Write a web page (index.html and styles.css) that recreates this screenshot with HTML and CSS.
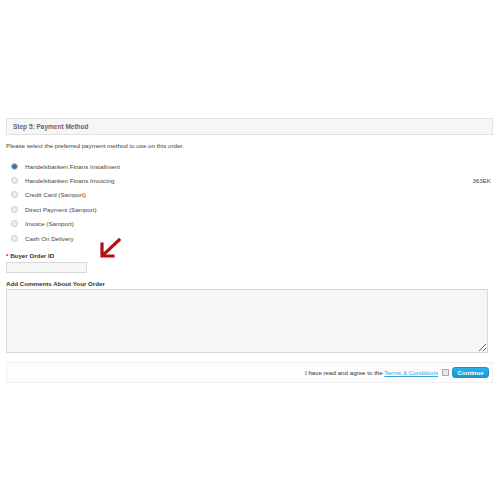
FILE: index.html
```html
<!doctype html>
<html lang="en">
<head>
    <meta charset="utf-8">
    <title>Checkout - Payment Method</title>
    <link rel="stylesheet" href="styles.css">
</head>
<body>
    <div class="checkout">
        <div class="step-heading">Step 5: Payment Method</div>

        <p class="intro">Please select the preferred payment method to use on this order.</p>

        <ul class="methods">
            <li><span class="radio checked"></span><span class="method-name">Handelsbanken Finans Installment</span></li>
            <li><span class="radio"></span><span class="method-name">Handelsbanken Finans Invoicing</span><span class="price">363EK</span></li>
            <li><span class="radio"></span><span class="method-name">Credit Card (Samport)</span></li>
            <li><span class="radio"></span><span class="method-name">Direct Payment (Samport)</span></li>
            <li><span class="radio"></span><span class="method-name">Invoice (Samport)</span></li>
            <li><span class="radio"></span><span class="method-name">Cash On Delivery</span></li>
        </ul>

        <div class="order-id">
            <label for="buyerOrderId" class="field-label"><span class="required">*</span> Buyer Order ID</label>
            <input type="text" id="buyerOrderId" class="order-input">
            <!-- red hint arrow -->
            <svg class="hint-arrow" width="24" height="22" viewBox="0 0 24 22">
                <path d="M21 2 L5 17" stroke="#b01010" stroke-width="3.2" fill="none" stroke-linecap="square"/>
                <path d="M4 6 L4 18 L15 18" stroke="#b01010" stroke-width="3.2" fill="none" stroke-linecap="square" stroke-linejoin="miter"/>
            </svg>
        </div>

        <label for="comments" class="field-label">Add Comments About Your Order</label>
        <textarea id="comments" class="comments"></textarea>

        <div class="buttons">
            <span class="agree">I have read and agree to the <a href="#" class="terms">Terms &amp; Conditions</a></span>
            <span class="check"></span>
            <button type="button" class="btn">Continue</button>
        </div>
    </div>
</body>
</html>
```

FILE: styles.css
```css
body {
    margin: 0;
    background-color: #fff;
    font-family: Arial, "Liberation Sans", sans-serif;
    font-size: 6.2px;
    color: #444;
}
.checkout {
    padding: 118px 7px 0 6px;
}
.step-heading {
    height: 15px;
    line-height: 15px;
    padding-left: 6px;
    background-color: #f6f6f6;
    border: 1px solid #e2e2e2;
    font-weight: bold;
    font-size: 6.5px;
    color: #666;
}
.intro {
    margin: 6px 0 0;
    line-height: 10px;
}
.methods {
    list-style: none;
    margin: 8px 0 0;
    padding: 0;
}
.methods li {
    display: flex;
    align-items: center;
    height: 14.4px;
}
.radio {
    width: 5px;
    height: 5px;
    margin: 0 7px 0 5px;
    border-radius: 50%;
    border: 1px solid #c8c8c8;
    background-color: #eee;
    box-sizing: content-box;
}
.radio.checked {
    background-color: #4a6f98;
    border-color: #b9c6d6;
}
.method-name {
    flex: 1;
}
.price {
    margin-right: 2px;
}
.order-id {
    position: relative;
    margin-top: 6px;
}
.field-label {
    display: block;
    font-weight: bold;
    color: #333;
    line-height: 10px;
}
.required {
    color: #d00;
}
.order-input {
    display: block;
    width: 81px;
    height: 11px;
    margin: 1px 0 0;
    padding: 0;
    box-sizing: border-box;
    border: 1px solid #d8d8d8;
    background-color: #f6f6f6;
}
.hint-arrow {
    position: absolute;
    left: 92px;
    top: -13px;
}
.order-id + .field-label {
    margin-top: 6px;
}
.comments {
    display: block;
    width: 482px;
    height: 64px;
    margin: 0;
    padding: 0;
    box-sizing: border-box;
    border: 1px solid #d8d8d8;
    background-color: #f6f6f6;
    resize: both;
}
.buttons {
    display: flex;
    justify-content: flex-end;
    align-items: center;
    height: 19px;
    margin-top: 9px;
    padding-right: 3px;
    border: 1px solid #f0f0f0;
    background-color: #fdfdfd;
}
.agree {
    color: #333;
}
.terms {
    color: #3aa0d8;
    text-decoration: underline;
}
.check {
    width: 5px;
    height: 5px;
    margin: 0 3px 0 4px;
    border: 1px solid #aaa;
    background-color: #e8e8e8;
}
.btn {
    width: 37px;
    height: 11px;
    padding: 0;
    border: 1px solid #1a8fd0;
    border-radius: 3px;
    background: linear-gradient(#2ab0ea, #1796d8);
    color: #fff;
    font-family: Arial, "Liberation Sans", sans-serif;
    font-weight: bold;
    font-size: 6px;
    cursor: pointer;
}
```
